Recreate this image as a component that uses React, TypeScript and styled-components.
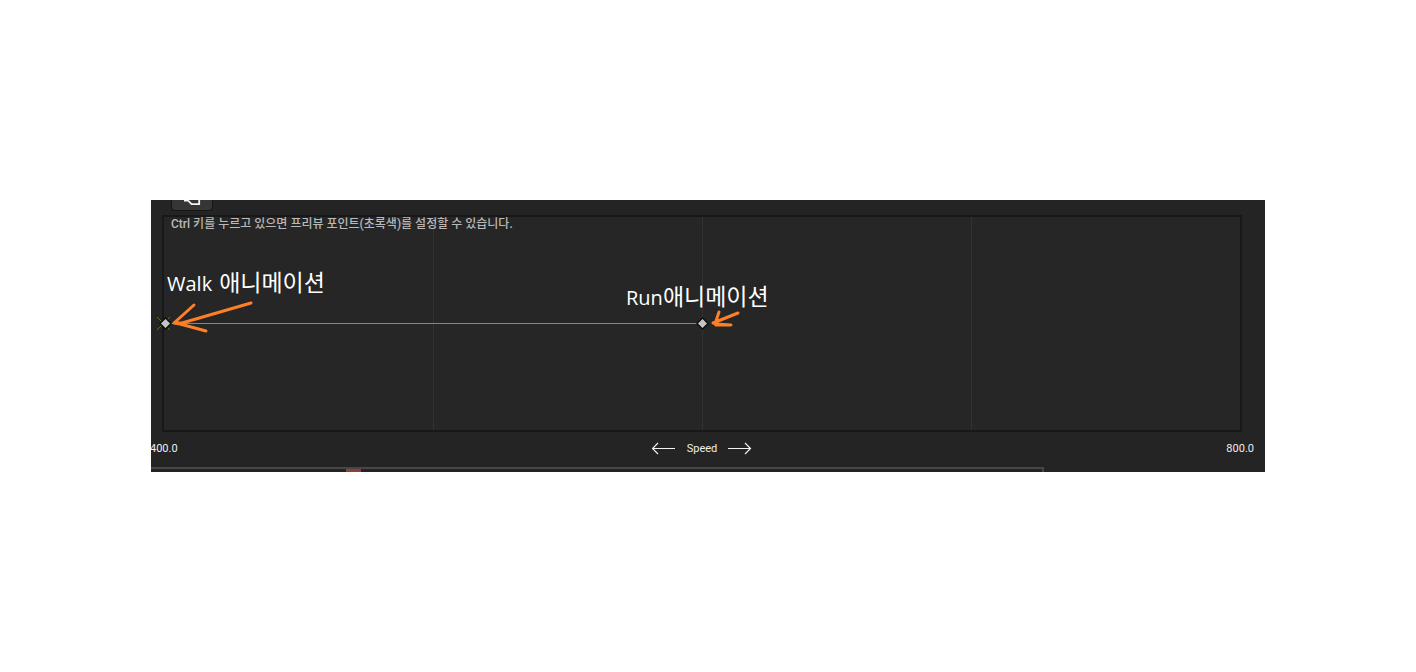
import React from "react";
import styled, { createGlobalStyle } from "styled-components";

const GlobalStyle = createGlobalStyle`
  * { box-sizing: border-box; }
  body { margin: 0; background: #fff; }
`;

const Page = styled.main`
  min-height: 100vh;
  display: flex;
  flex-direction: column;
  justify-content: center;
  padding: 0 151px;
`;

const Editor = styled.section`
  overflow: hidden;
  background: #242424;
  color: #eee;
  font-family: Roboto, "Noto Sans CJK KR", sans-serif;
`;

const Toolbar = styled.div`
  height: 15px;
  display: flex;
  align-items: flex-start;
  padding-left: 20px;
`;

const ToolButton = styled.button`
  width: 42px;
  height: 11px;
  padding: 0;
  display: flex;
  justify-content: center;
  background: #363636;
  border: 1px solid #161616;
  border-top: 0;
  border-radius: 0 0 4px 4px;
`;

const Plot = styled.div`
  position: relative;
  height: 217px;
  margin: 0 23px 0 11px;
  border: 2px solid #181818;
  background: #262626;
  display: grid;
  grid-template-columns: repeat(4, 1fr);
`;

const Cell = styled.div`
  & + & { border-left: 1px solid #323232; }
`;

const Hint = styled.p`
  position: absolute;
  left: 7px;
  top: 0;
  margin: 0;
  font-size: 12px;
  line-height: 15px;
  font-weight: 500;
  color: #b9b9b9;
  white-space: nowrap;
`;

const Track = styled.div`
  position: absolute;
  left: 0;
  width: 50%;
  top: 106px;
  height: 1px;
  background: #858585;
`;

const Sample = styled.div<{ $at: string }>`
  position: absolute;
  left: ${(p) => p.$at};
  top: 106px;
  width: 0;
  height: 0;
`;

const Drawing = styled.svg`
  position: absolute;
  left: 0;
  top: 0;
  width: 1px;
  height: 1px;
  overflow: visible;
`;

const Note = styled.div<{ $x: number; $y: number; $gap: number }>`
  position: absolute;
  left: ${(p) => p.$x}px;
  top: ${(p) => p.$y}px;
  display: flex;
  align-items: baseline;
  gap: ${(p) => p.$gap}px;
  white-space: nowrap;
  color: #fff;
  font-family: "Open Sans", "Noto Sans CJK KR", sans-serif;
  font-size: 20px;
  line-height: 28px;
`;

const Hangul = styled.span`
  font-family: "Noto Sans CJK KR", sans-serif;
  font-size: 23px;
  font-weight: 400;
`;

const Axis = styled.div`
  height: 35px;
  margin: 0 11px 0 -1px;
  padding-bottom: 2px;
  display: flex;
  align-items: center;
  justify-content: space-between;
  font-size: 11px;
  line-height: 13px;
`;

const AxisName = styled.div`
  display: flex;
  align-items: center;
  gap: 11px;
`;

const Timeline = styled.div`
  height: 5px;
  width: 80.2%;
  border-top: 2px solid #464646;
  border-right: 2px solid #464646;
`;

const Playhead = styled.div`
  width: 15px;
  height: 3px;
  margin-left: 21.9%;
  background: #8d3e3e;
`;

function Diamond({ x }: { x: number }) {
  return (
    <path
      d={`M${x} -5L${x + 5.5} .5L${x} 6L${x - 5.5} .5Z`}
      fill="#c4c4c4"
      stroke="#0c0c0c"
      strokeWidth="1.3"
    />
  );
}

function AxisArrow({ flip }: { flip?: boolean }) {
  return (
    <svg width="24" height="13" viewBox="0 0 24 13" fill="none" stroke="#f2f2f2" strokeWidth="1.2" aria-hidden="true">
      <path d={flip ? "M0 6.5H22.5M17 1L22.5 6.5L17 12" : "M23 6.5H.5M6 1L.5 6.5L6 12"} />
    </svg>
  );
}

export default function App() {
  return (
    <>
      <GlobalStyle />
      <Page>
        <Editor>
          <Toolbar>
            <ToolButton type="button" aria-label="Tag">
              <svg width="18" height="6" viewBox="0 0 18 6" fill="none" stroke="#f4f4f4" strokeWidth="1.8" aria-hidden="true">
                <path d="M1 .5H5L8.5 4.2H16.2V-1" />
              </svg>
            </ToolButton>
          </Toolbar>
          <Plot>
            <Cell />
            <Cell />
            <Cell />
            <Cell />
            <Hint>Ctrl 키를 누르고 있으면 프리뷰 포인트(초록색)를 설정할 수 있습니다.</Hint>
            <Track />
            <Sample $at="0%">
              <Drawing aria-hidden="true">
                <path d="M-7 -6L6 7M6 -6L-7 7" stroke="#54772c" strokeWidth="1" />
                <Diamond x={1.5} />
                <g fill="none" stroke="#ff7f27" strokeWidth="3" strokeLinecap="round" strokeLinejoin="round">
                  <path d="M87 -20L18 0L10 0L30 -18M10 0L16 1L42 8" />
                </g>
              </Drawing>
              <Note $x={3} $y={-56} $gap={7}>
                <span>Walk</span>
                <Hangul>애니메이션</Hangul>
              </Note>
            </Sample>
            <Sample $at="50%">
              <Drawing aria-hidden="true">
                <Diamond x={0.5} />
                <g fill="none" stroke="#ff7f27" strokeWidth="3" strokeLinecap="round" strokeLinejoin="round">
                  <path d="M36 -10L11 0M17 -11L13 1L29 2H14" />
                </g>
              </Drawing>
              <Note $x={-76} $y={-42} $gap={0}>
                <span>Run</span>
                <Hangul>애니메이션</Hangul>
              </Note>
            </Sample>
          </Plot>
          <Axis>
            <span>400.0</span>
            <AxisName>
              <AxisArrow />
              <span>Speed</span>
              <AxisArrow flip />
            </AxisName>
            <span>800.0</span>
          </Axis>
          <Timeline>
            <Playhead />
          </Timeline>
        </Editor>
      </Page>
    </>
  );
}
